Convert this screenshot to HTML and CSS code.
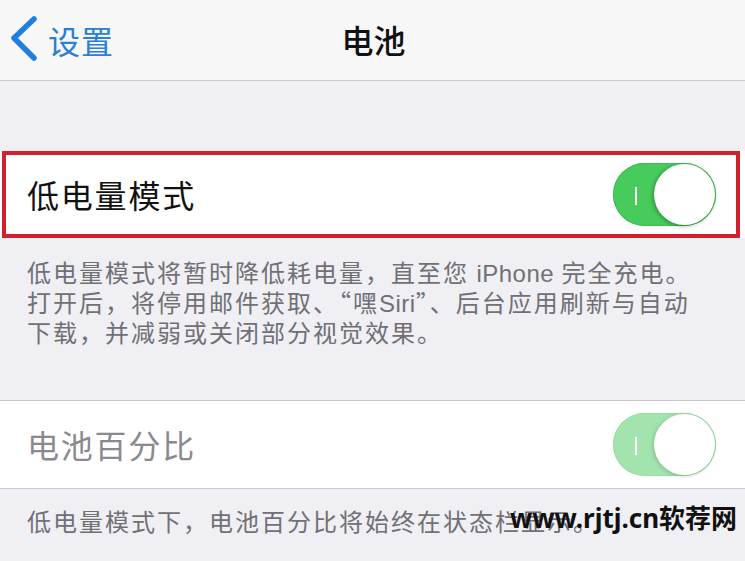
FILE: index.html
```html
<html>
    <head>
        <title>电池</title>
        <meta name="viewport" content="width=device-width, initial-scale=1.0">
        <link rel="stylesheet" href="styles.css">
    </head>
    <body>
        <div class="nav">
            <a class="back">
                <svg width="30" height="46" viewBox="0 0 30 46"><polyline points="25,3 5,22 25,42" fill="none" stroke="#1f7ee0" stroke-width="5.5" stroke-linecap="round" stroke-linejoin="round"/></svg>
                <span>设置</span>
            </a>
            <div class="title">电池</div>
            <div></div>
        </div>

        <div class="cell marked">
            <span class="label">低电量模式</span>
            <span class="switch"><i></i><b></b></span>
        </div>
        <p class="note">低电量模式将暂时降低耗电量，直至您 <span class="latin">iPhone</span> 完全充电。打开后，将停用邮件获取、“嘿<span class="latin">Siri</span>”、后台应用刷新与自动下载，并减弱或关闭部分视觉效果。</p>

        <div class="cell lined">
            <span class="label dim">电池百分比</span>
            <span class="switch faded"><i></i><b></b></span>
        </div>
        <p class="note last">低电量模式下，电池百分比将始终在状态栏显示。</p>

        <div class="mark">www.rjtj.cn软荐网</div>
    </body>
</html>
```

FILE: styles.css
```css
body {margin:0;background:#efeff4;font-family:"Noto Sans CJK SC","Noto Sans",sans-serif;height:561px;overflow:hidden;position:relative;}
.nav {height:80px;background:#f7f7f8;border-bottom:1px solid #c8c7cc;display:grid;grid-template-columns:1fr auto 1fr;align-items:center;}
.back {display:flex;align-items:center;color:#2a7fd6;font-size:32px;padding-left:9px;letter-spacing:1px;}
.back svg {margin-right:9px;margin-top:-2px;}
.title {font-size:32px;font-weight:500;color:#111;letter-spacing:0;padding-left:2px;margin-top:-2px;}
.cell {background:#fff;height:87px;display:flex;align-items:center;justify-content:space-between;padding:0 29px 0 27px;position:relative;}
.marked {margin-top:70px;}
.marked::after {content:"";position:absolute;left:2px;right:5px;top:0;bottom:0;border:4px solid #d2202f;}
.lined {border-top:1px solid #c8c7cc;border-bottom:1px solid #c8c7cc;height:87px;}
.label {font-size:32px;letter-spacing:1.8px;color:#111;margin-top:-2px;}
.label.dim {color:#8a8a8e;}
.switch {width:103px;height:63px;border-radius:32px;background:#46cb5c;position:relative;box-shadow:inset 0 0 0 1px #3fb853;}
.switch b {position:absolute;right:1px;top:1px;width:61px;height:61px;border-radius:50%;background:#fff;box-shadow:-1px 1px 4px rgba(0,0,0,0.35);}
.switch i {position:absolute;left:22px;top:24px;width:2px;height:18px;background:#fff;}
.switch.faded {background:#a3e4ae;box-shadow:inset 0 0 0 1px #98dba3;}
.switch.faded b {box-shadow:-1px 1px 4px rgba(0,0,0,0.18);}
.note {margin:0;padding:19px 40px 53px 27px;font-size:24px;line-height:30px;letter-spacing:2px;color:#707075;}
.note .latin {font-family:"Liberation Sans",sans-serif;letter-spacing:0.5px;line-height:0;}
.note.last {padding:17px 40px 0 27px;}
.mark {position:absolute;left:510px;top:498px;font-family:"Noto Sans","Noto Sans CJK SC",sans-serif;font-size:26px;font-weight:700;color:#111;letter-spacing:0;}
```
